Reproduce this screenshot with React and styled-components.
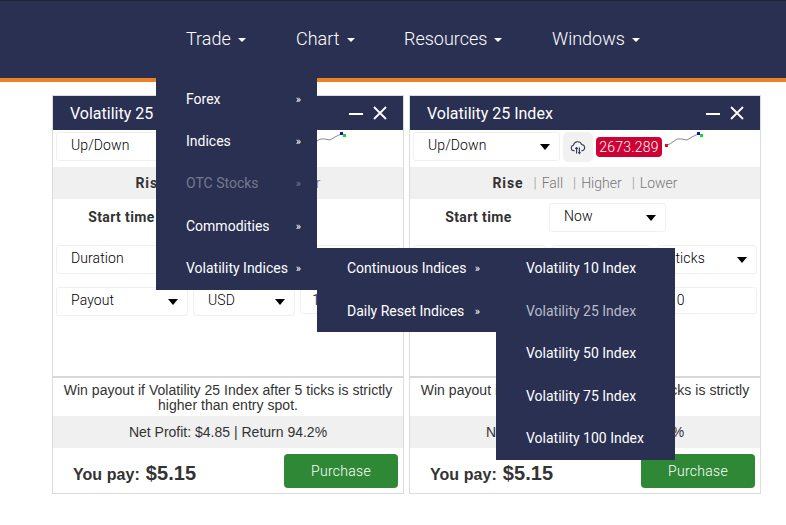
import React from 'react';
import styled, { createGlobalStyle } from 'styled-components';

const Global = createGlobalStyle`
  html, body { margin: 0; padding: 0; background: #fff; }
  body { font-family: "Liberation Sans", Arial, sans-serif; width: 786px; height: 525px; overflow: hidden; }
  * { box-sizing: border-box; }
`;
const NAVY = '#2a3052';

const Header = styled.header`
  height: 82px;
  background: ${NAVY};
  border-top: 1px solid #1d2536;
  border-bottom: 4px solid #ec8126;
`;
const Nav = styled.nav`
  display: flex;
  padding-left: 156px;
  height: 77px;
  font-family: Roboto, sans-serif;
`;
const NavItem = styled.div`
  position: relative;
  width: ${p => p.$w}px;
  padding: 27px 0 0 30px;
  height: 77px;
  color: #fff;
  font-size: 18px;
  font-weight: 300;
  line-height: 21px;
  display: flex;
  align-items: flex-start;
  gap: 7px;
`;
const NavCaret = styled.span`
  width: 0; height: 0;
  margin-top: 10px;
  border-left: 4px solid transparent;
  border-right: 4px solid transparent;
  border-top: 4px solid #fff;
`;
const Menu = styled.div`
  position: absolute;
  z-index: 5;
  left: ${p => p.$left}px;
  top: ${p => p.$top}px;
  width: ${p => p.$w}px;
  background: ${NAVY};
  font-size: 14px;
  font-weight: 400;
`;
const MenuItem = styled.div`
  position: relative;
  height: 42.4px;
  padding-left: 30px;
  display: flex;
  align-items: center;
  color: ${p => (p.$dim ? '#75798f' : p.$soft ? '#b9bbc8' : '#fff')};
  white-space: nowrap;
`;
const Chevron = styled.span`
  position: absolute;
  right: 16px;
  font-size: 11px;
`;

const Main = styled.main`
  display: flex;
  gap: 5px;
  padding: 13px 0 0 52px;
`;
const Card = styled.section`
  width: 352px;
  height: 399px;
  border: 1px solid #dcdcdc;
  display: flex;
  flex-direction: column;
`;
const TitleBar = styled.div`
  height: 34px;
  flex: none;
  background: ${NAVY};
  color: #fff;
  padding: 1px 15px 0 17px;
  display: flex;
  align-items: center;
  justify-content: space-between;
  font: 400 16px/33px Roboto, sans-serif;
`;
const TitleIcons = styled.div`
  display: flex;
  gap: 9px;
  align-items: center;
  margin-top: -1px;
`;
const Row = styled.div`
  display: flex;
  gap: ${p => p.$gap ?? 5}px;
  padding: ${p => p.$pad ?? '0 3px'};
  align-items: flex-start;
`;
const Field = styled.div`
  position: relative;
  flex: none;
  width: ${p => p.$w}px;
  height: ${p => p.$h ?? 29}px;
  border: 1px solid #f0f0f0;
  border-radius: 3px;
  padding-left: ${p => p.$pl ?? 14}px;
  font: 300 14px/24px Roboto, sans-serif;
  letter-spacing: 0.1px;
  color: #000;
`;
const Arrow = styled.span`
  position: absolute;
  right: 9px;
  top: 11px;
  width: 0; height: 0;
  border-left: 5.5px solid transparent;
  border-right: 5.5px solid transparent;
  border-top: 6px solid #000;
`;
const CloudButton = styled.div`
  flex: none;
  width: 30px;
  height: 30px;
  margin-left: -2px;
  background: #f1f1f1;
  border-radius: 5px;
  display: flex;
  align-items: center;
  justify-content: center;
`;
const Price = styled.div`
  flex: none;
  margin: 5px 0 0 -2px;
  width: 66px;
  height: 20px;
  border-radius: 4px;
  background: #cd0133;
  color: #fff;
  text-align: center;
  font: 300 14px/20px Roboto, sans-serif;
  letter-spacing: 0.2px;
`;
const Spark = styled.svg`
  flex: none;
  margin-left: -3px;
  width: 42px;
  height: 16px;
`;
const Tabs = styled.div`
  margin-top: 5px;
  height: 32px;
  background: #f0f0f0;
  display: flex;
  justify-content: center;
  align-items: center;
  font: 300 14px Roboto, sans-serif;
  color: #777;
`;
const TabActive = styled.b`
  font-weight: 700;
  color: #333;
  letter-spacing: 0.9px;
  margin-right: 10px;
`;
const Tab = styled.span`
  margin-right: 10px;
  &:last-child { margin-right: 0; }
`;
const Bar = styled.i`
  font-style: normal;
  margin-right: 5px;
  color: #999;
`;
const StartLabel = styled.div`
  width: 136px;
  flex: none;
  padding-right: 5px;
  text-align: center;
  font: bold 14px/29px Roboto, sans-serif;
  letter-spacing: 0.4px;
  color: #333;
`;
const Spacer = styled.div`
  flex: 1;
  border-bottom: 2px solid #d8d8d8;
`;
const Description = styled.p`
  margin: 0;
  padding-top: 5px;
  height: 38px;
  flex: none;
  text-align: center;
  font-size: 14px;
  line-height: 15px;
  letter-spacing: 0.03px;
  color: #333;
`;
const Profit = styled.div`
  height: 32px;
  flex: none;
  background: #f0f0f0;
  text-align: center;
  font-size: 14px;
  line-height: 32px;
  color: #333;
`;
const Footer = styled.div`
  flex: none;
  height: 45px;
  display: flex;
  justify-content: space-between;
  padding: 6px 5px 0 20px;
`;
const Pay = styled.div`
  padding-top: 8px;
  font-weight: bold;
  font-size: 16px;
  line-height: 23px;
  letter-spacing: 0.05px;
  color: #333;
  display: flex;
  align-items: baseline;
  gap: 6px;
`;
const Amount = styled.span`
  font-size: 20px;
`;
const Purchase = styled.button`
  width: 114px;
  height: 34px;
  border: 0;
  border-radius: 4px;
  background: #2e8836;
  color: #fff;
  font: 300 14px Roboto, sans-serif;
  letter-spacing: 0.3px;
`;

const CloudIcon = () => (
  <svg width="16" height="15" viewBox="0 0 17 16" fill="none" stroke="#2f3a4e" strokeWidth="1.1">
    <path d="M5 11.5H4A3 3 0 0 1 3.6 5.6 4.6 4.6 0 0 1 12.4 4.8 3.4 3.4 0 0 1 13 11.5H12" />
    <path d="M7 14.5V8M5.6 9.5 7 8l1.4 1.5M10 8v6.5M8.9 13 10 14.5 11.1 13" strokeWidth="1.2" />
  </svg>
);
const MinusIcon = () => (
  <svg width="14" height="14" viewBox="0 0 14 14"><path d="M0 8h14" stroke="#fff" strokeWidth="2" /></svg>
);
const CloseIcon = () => (
  <svg width="16" height="16" viewBox="0 0 16 16"><path d="M2 2l12 12M14 2 2 14" stroke="#fff" strokeWidth="1.8" /></svg>
);
const Sparkline = () => (
  <Spark viewBox="0 0 42 16">
    <path d="M2 13 6 12 13 7 18 7 23 8 28 5 34 2 38 3" fill="none" stroke="#8a8a8a" strokeWidth="1" />
    <rect x="1" y="12" width="3" height="3" fill="#e01010" />
    <rect x="33" y="0" width="3" height="3" fill="#1010e0" />
    <rect x="36" y="2" width="3" height="3" fill="#10e010" />
  </Spark>
);

const Select = ({ w, children, pl }) => (
  <Field $w={w} $pl={pl}>{children}<Arrow /></Field>
);

const TradeWindow = () => (
  <Card>
    <TitleBar>
      Volatility 25 Index
      <TitleIcons><MinusIcon /><CloseIcon /></TitleIcons>
    </TitleBar>
    <Row $pad="2px 3px 0" $gap={5}>
      <Select w={147}>Up/Down</Select>
      <CloudButton><CloudIcon /></CloudButton>
      <Price>2673.289</Price>
      <Sparkline />
    </Row>
    <Tabs>
      <TabActive>Rise</TabActive>
      <Bar>|</Bar><Tab>Fall</Tab>
      <Bar>|</Bar><Tab>Higher</Tab>
      <Bar>|</Bar><Tab>Lower</Tab>
    </Tabs>
    <Row $pad="4px 0 0 3px" $gap={0}>
      <StartLabel>Start time</StartLabel>
      <Select w={117}>Now</Select>
    </Row>
    <Row $pad="13px 3px 0" $gap={6}>
      <Select w={133}>Duration</Select>
      <Field $w={99}>5</Field>
      <Select w={100}>&nbsp;ticks</Select>
    </Row>
    <Row $pad="13px 3px 0" $gap={5}>
      <Select w={132}>Payout</Select>
      <Select w={102}>USD</Select>
      <Field $w={100} $h={27} $pl={11}>10</Field>
    </Row>
    <Spacer />
    <Description>Win payout if Volatility 25 Index after 5 ticks is strictly higher than entry spot.</Description>
    <Profit>Net Profit: $4.85 | Return 94.2%</Profit>
    <Footer>
      <Pay>You pay: <Amount>$5.15</Amount></Pay>
      <Purchase>Purchase</Purchase>
    </Footer>
  </Card>
);

const MenuRow = ({ children, dim, soft, more }) => (
  <MenuItem $dim={dim} $soft={soft}>{children}{more && <Chevron>»</Chevron>}</MenuItem>
);

export default function App() {
  return (
    <>
      <Global />
      <Header>
        <Nav>
          <NavItem $w={110}>
            Trade<NavCaret />
            <Menu $left={0} $top={77} $w={161}>
              <MenuRow more>Forex</MenuRow>
              <MenuRow more>Indices</MenuRow>
              <MenuRow more dim>OTC Stocks</MenuRow>
              <MenuRow more>Commodities</MenuRow>
              <MenuRow more>Volatility Indices</MenuRow>
              <Menu $left={161} $top={169.7} $w={179}>
                <MenuRow more>Continuous Indices</MenuRow>
                <MenuRow more>Daily Reset Indices</MenuRow>
                <Menu $left={179} $top={0} $w={179}>
                  <MenuRow>Volatility 10 Index</MenuRow>
                  <MenuRow soft>Volatility 25 Index</MenuRow>
                  <MenuRow>Volatility 50 Index</MenuRow>
                  <MenuRow>Volatility 75 Index</MenuRow>
                  <MenuRow>Volatility 100 Index</MenuRow>
                </Menu>
              </Menu>
            </Menu>
          </NavItem>
          <NavItem $w={108}>Chart<NavCaret /></NavItem>
          <NavItem $w={148}>Resources<NavCaret /></NavItem>
          <NavItem $w={140}>Windows<NavCaret /></NavItem>
        </Nav>
      </Header>
      <Main>
        <TradeWindow />
        <TradeWindow />
      </Main>
    </>
  );
}
